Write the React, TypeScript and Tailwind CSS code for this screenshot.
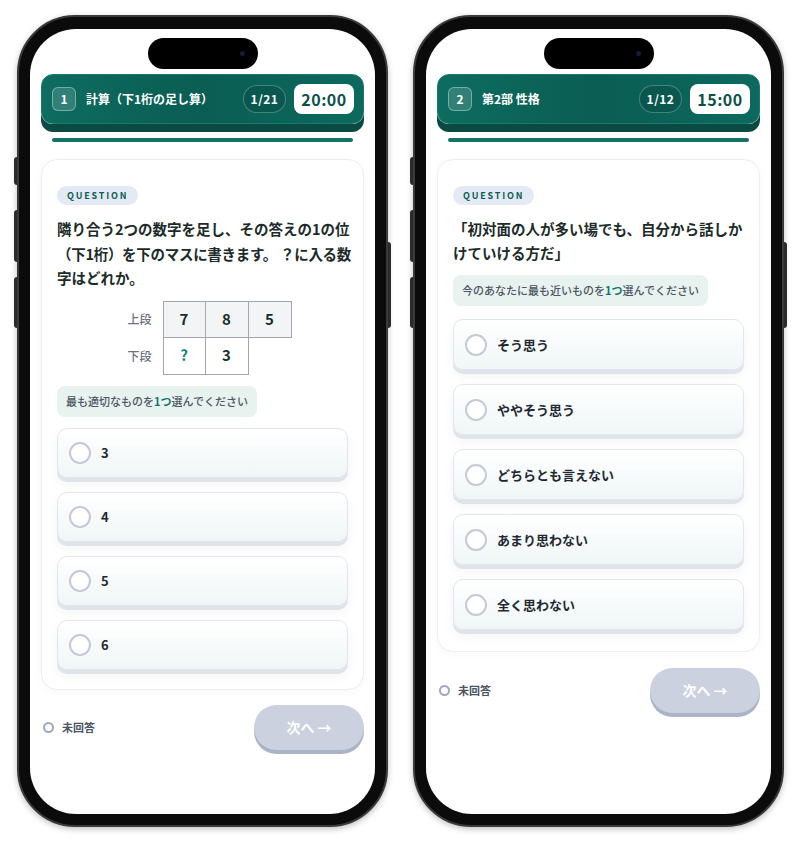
import React from 'react';

const jp = { fontFamily: '"Noto Sans CJK JP", "Noto Sans", sans-serif' };

function Phone({ children }: { children: React.ReactNode }) {
  return (
    <div className="relative w-[371px] h-[812px] shrink-0">
      {/* side buttons */}
      <div className="absolute left-[-3px] top-[142px] w-[3px] h-[28px] rounded-l bg-[#2b2b2b]" />
      <div className="absolute left-[-3px] top-[195px] w-[3px] h-[52px] rounded-l bg-[#2b2b2b]" />
      <div className="absolute left-[-3px] top-[262px] w-[3px] h-[51px] rounded-l bg-[#2b2b2b]" />
      <div className="absolute right-[-3px] top-[227px] w-[3px] h-[86px] rounded-r bg-[#2b2b2b]" />
      <div className="w-full h-full rounded-[58px] bg-[#0b0b0b] border-[2px] border-[#3a3a3a] p-[11px] pt-[12px] shadow-[0_2px_6px_rgba(0,0,0,0.25)]">
        <div className="w-full h-full rounded-[46px] bg-white overflow-hidden flex flex-col px-[11px]">
          <div className="relative mx-auto mt-[9px] w-[110px] h-[31px] rounded-full bg-black shrink-0">
            <div className="absolute right-[13px] top-[13px] w-[5px] h-[5px] rounded-full bg-[#0f1d3a]" />
          </div>
          {children}
        </div>
      </div>
    </div>
  );
}

function Header({ num, title, count, time }: { num: string; title: string; count: string; time: string }) {
  return (
    <div className="mt-[5px] shrink-0">
      <div className="h-[50px] rounded-[12px] bg-gradient-to-r from-[#0e6c60] via-[#0a5d53] to-[#0d695e] border border-[#1a7a6d] shadow-[0_8px_0_#0a4a42] flex items-center pl-[10px] pr-[9px]">
        <div className="w-[24px] h-[24px] rounded-[6px] bg-white/15 border border-white/35 flex items-center justify-center text-white text-[12px] font-bold">
          {num}
        </div>
        <div className="ml-[10px] text-white text-[12px] font-bold flex-1">{title}</div>
        <div className="h-[28px] w-[43px] rounded-full border border-white/25 bg-black/10 flex items-center justify-center text-white text-[12px] font-bold tracking-[0.04em]">
          {count}
        </div>
        <div className="ml-[8px] h-[30px] w-[60px] rounded-[8px] bg-white flex items-center justify-center text-[#0c5148] text-[16px] font-bold tracking-[0.03em]">
          {time}
        </div>
      </div>
      <div className="mx-[11px] mt-[14px] h-[4px] rounded-full bg-[#127366]" />
    </div>
  );
}

function Option({ label, tall }: { label: string; tall?: boolean }) {
  return (
    <div
      className={`${tall ? 'h-[51px]' : 'h-[50px]'} rounded-[10px] border border-[#e2e6ed] bg-gradient-to-b from-white to-[#f0f6f7] shadow-[0_4px_0_#dfe3ea,0_6px_12px_rgba(30,40,60,0.05)] flex items-center pl-[11px]`}
    >
      <div className="w-[22px] h-[22px] rounded-full border-2 border-[#c4cad7] bg-white" />
      <div className="ml-[10px] text-[13px] font-bold text-[#1f2933]">{label}</div>
    </div>
  );
}

function Card({ children, pb }: { children: React.ReactNode; pb: string }) {
  return (
    <div className={`mt-[17px] rounded-[16px] border border-[#eceef2] bg-white shadow-[0_2px_10px_rgba(30,40,60,0.03)] px-[15px] pt-[26px] ${pb}`}>
      <div className="flex w-fit items-center h-[19px] px-[10px] rounded-full bg-[#e4eaf5] text-[9px] leading-none font-bold tracking-[0.2em] text-[#0f5c52]">
        QUESTION
      </div>
      {children}
    </div>
  );
}

function Instruction({ pre, post }: { pre: string; post: string }) {
  return (
    <div className="mt-[11px] flex w-fit items-center h-[31px] px-[9px] rounded-[8px] bg-[#e8f2ef] text-[11px] text-[#4b5563] font-medium">
      {pre}
      <span className="text-[#0f766e] font-bold">1つ</span>
      {post}
    </div>
  );
}

function Footer({ mt }: { mt: string }) {
  return (
    <div className={`${mt} flex items-center justify-between pl-[2px]`}>
      <div className="flex items-center">
        <div className="w-[11px] h-[11px] rounded-full border-2 border-[#9ea6c1]" />
        <span className="ml-[8px] text-[11px] font-bold text-[#4b5563]">未回答</span>
      </div>
      <div className="w-[110px] h-[45px] rounded-full bg-[#cbd1de] shadow-[0_4px_0_#abb3c6] flex items-center justify-center text-white text-[14px] font-bold">
        次へ →
      </div>
    </div>
  );
}

export default function App() {
  const cell = 'w-[43px] h-[37px] flex items-center justify-center text-[15px] font-bold text-[#17302b]';
  return (
    <div className="w-[800px] h-[842px] bg-white flex pl-[17px] pt-[15px] gap-[25px]" style={jp}>
      <Phone>
        <Header num="1" title="計算（下1桁の足し算）" count="1/21" time="20:00" />
        <Card pb="pb-[19px]">
          <div className="mt-[12px] text-[14.5px] leading-[24.5px] font-bold text-[#1c2b2a] whitespace-nowrap">
            <div>隣り合う2つの数字を足し、その答えの1の位</div>
            <div className="tracking-[-0.02em]">（下1桁）を下のマスに書きます。 ？に入る数</div>
            <div>字はどれか。</div>
          </div>
          <div className="mt-[10px] flex justify-center pl-[14px]">
            <div className="flex flex-col justify-around pr-[11px] text-[12px] text-[#6b7280] font-medium">
              <span>上段</span>
              <span>下段</span>
            </div>
            <div className="flex flex-col">
              <div className="flex">
                <div className={`${cell} bg-[#f3f4f6] border border-[#a3a7ad]`}>7</div>
                <div className={`${cell} bg-[#f3f4f6] border border-l-0 border-[#a3a7ad]`}>8</div>
                <div className={`${cell} bg-[#f3f4f6] border border-l-0 border-[#a3a7ad]`}>5</div>
              </div>
              <div className="flex">
                <div className={`${cell} border border-t-0 border-[#a3a7ad] text-[#138074]`}>?</div>
                <div className={`${cell} border border-t-0 border-l-0 border-[#a3a7ad]`}>3</div>
              </div>
            </div>
          </div>
          <Instruction pre="最も適切なものを" post="選んでください" />
          <div className="mt-[11px] flex flex-col gap-[14px]">
            {['3', '4', '5', '6'].map((o) => (
              <Option key={o} label={o} />
            ))}
          </div>
        </Card>
        <Footer mt="mt-[15px]" />
      </Phone>
      <Phone>
        <Header num="2" title="第2部 性格" count="1/12" time="15:00" />
        <Card pb="pb-[21px]">
          <div className="mt-[12px] text-[14.5px] leading-[23.5px] font-bold text-[#1c2b2a] whitespace-nowrap">
            <div>「初対面の人が多い場でも、自分から話しか</div>
            <div>けていける方だ」</div>
          </div>
          <Instruction pre="今のあなたに最も近いものを" post="選んでください" />
          <div className="mt-[13px] flex flex-col gap-[14px]">
            {['そう思う', 'ややそう思う', 'どちらとも言えない', 'あまり思わない', '全く思わない'].map((o) => (
              <Option key={o} label={o} tall />
            ))}
          </div>
        </Card>
        <Footer mt="mt-[16px]" />
      </Phone>
    </div>
  );
}
